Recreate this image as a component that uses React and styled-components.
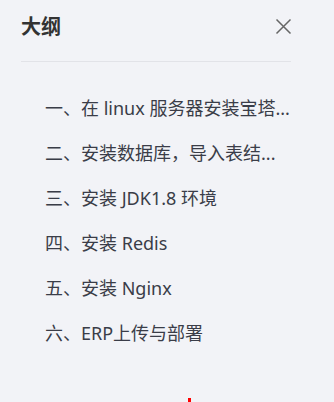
import styled, { createGlobalStyle } from 'styled-components';

const GlobalStyle = createGlobalStyle`
  html, body {
    margin: 0;
    padding: 0;
    background: #f2f3f7;
  }
  body {
    font-family: "Noto Sans", "Noto Sans CJK SC", sans-serif;
  }
`;

const Panel = styled.div`
  position: relative;
  width: 334px;
  height: 402px;
  box-sizing: border-box;
  padding: 0 43px 0 21px;
  overflow: hidden;
`;

const Header = styled.div`
  display: flex;
  align-items: center;
  justify-content: space-between;
  height: 52px;
  padding-bottom: 9px;
  border-bottom: 1px solid #e2e3e8;
`;

const Title = styled.h2`
  margin: 0;
  font-size: 20px;
  font-weight: 700;
  line-height: 24px;
  color: #333;
  font-family: "Noto Sans CJK SC", sans-serif;
`;

const CloseButton = styled.button`
  display: flex;
  align-items: center;
  justify-content: center;
  width: 17px;
  height: 17px;
  padding: 0;
  margin-right: -1px;
  border: none;
  background: none;
  cursor: pointer;
`;

const List = styled.ul`
  list-style: none;
  margin: 0;
  padding: 24px 0 0 24px;
`;

const Item = styled.li`
  height: 45px;
  line-height: 45px;
  font-size: 18px;
  color: #3a3d48;
  white-space: nowrap;
  cursor: pointer;
`;

const Dot = styled.span`
  position: absolute;
  left: 188px;
  top: 398px;
  width: 3px;
  height: 4px;
  background: #f00;
`;

// titles are shortened the way the outline shows them
const items = [
  '一、在 linux 服务器安装宝塔...',
  '二、安装数据库，导入表结...',
  '三、安装 JDK1.8 环境',
  '四、安装 Redis',
  '五、安装 Nginx',
  '六、ERP上传与部署',
];

export default function App() {
  return (
    <Panel>
      <GlobalStyle />
      <Header>
        <Title>大纲</Title>
        <CloseButton aria-label="关闭">
          <svg width="17" height="17" viewBox="0 0 17 17">
            <path d="M1.5 1.5 L15.5 15.5 M15.5 1.5 L1.5 15.5" stroke="#666" strokeWidth="1.5" fill="none" />
          </svg>
        </CloseButton>
      </Header>
      <List>
        {items.map((text, i) => (
          <Item key={i}>{text}</Item>
        ))}
      </List>
      <Dot />
    </Panel>
  );
}
